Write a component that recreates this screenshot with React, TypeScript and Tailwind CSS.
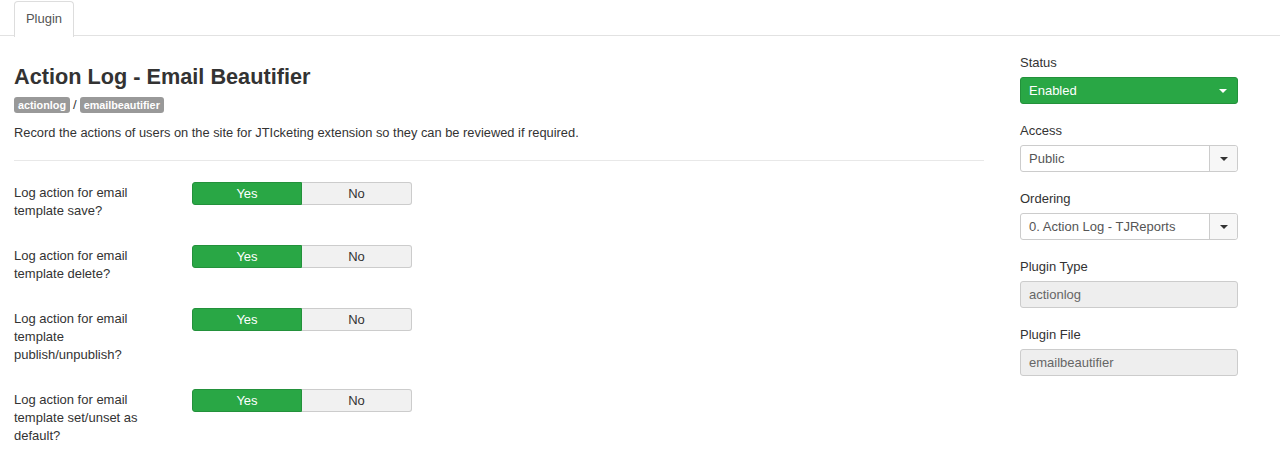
import React from 'react';

const rows = [
  'Log action for email template save?',
  'Log action for email template delete?',
  'Log action for email template publish/unpublish?',
  'Log action for email template set/unset as default?',
];

function Caret({ className }: { className: string }) {
  return (
    <svg width="8" height="4" viewBox="0 0 8 4" className={className}>
      <path d="M0 0h8L4 4z" fill="currentColor" />
    </svg>
  );
}

function YesNo() {
  return (
    <div className="flex w-[220px] h-[23px] text-[13px] leading-[21px] shrink-0">
      <div className="w-[110px] bg-[#29a745] border border-[#23913b] rounded-l-[3px] text-white text-center">
        Yes
      </div>
      <div className="flex-1 bg-[#f1f1f1] border border-l-0 border-[#cccccc] rounded-r-[3px] text-[#333] text-center">
        No
      </div>
    </div>
  );
}

function Field({ label, children }: { label: string; children: React.ReactNode }) {
  return (
    <div className="mb-[18px]">
      <div className="text-[13px] leading-[18px] text-[#333] mb-[5px]">{label}</div>
      {children}
    </div>
  );
}

function Select({ value }: { value: string }) {
  return (
    <div className="flex h-[27px] border border-[#cccccc] rounded-[3px] bg-white text-[13px] text-[#555]">
      <div className="flex-1 px-[8px] leading-[25px]">{value}</div>
      <div className="w-[28px] flex items-center justify-center bg-[#f7f7f7] border-l border-[#cccccc] rounded-r-[3px]">
        <Caret className="text-[#333]" />
      </div>
    </div>
  );
}

function ReadOnly({ value }: { value: string }) {
  return (
    <div className="h-[27px] px-[8px] leading-[25px] border border-[#cccccc] rounded-[3px] bg-[#eeeeee] text-[13px] text-[#666]">
      {value}
    </div>
  );
}

export default function App() {
  return (
    <div className="w-[1280px] h-[459px] bg-white overflow-hidden font-['Liberation_Sans',Arial,sans-serif]">
      {/* Tabs */}
      <div className="flex pl-[14px] pt-[1px] border-b border-[#e2e2e2] h-[36px]">
        <div className="w-[60px] h-[36px] bg-white border border-b-0 border-[#dddddd] rounded-t-[4px] text-[13px] text-[#555] text-center leading-[33px]">
          Plugin
        </div>
      </div>

      <div className="flex pl-[14px]">
        {/* Main column */}
        <div className="w-[970px] pt-[28px]">
          <h1 className="text-[21.7px] leading-[26px] font-bold text-[#333]">Action Log - Email Beautifier</h1>
          <div className="flex items-center gap-[3px] mt-[7px] text-[10.8px] font-bold leading-[16px]">
            <span className="bg-[#999] text-white rounded-[3px] px-[4px]">actionlog</span>
            <span className="text-[#333] text-[13px] font-normal">/</span>
            <span className="bg-[#999] text-white rounded-[3px] px-[4px]">emailbeautifier</span>
          </div>
          <p className="text-[12.85px] leading-[18px] text-[#333] mt-[11px]">
            Record the actions of users on the site for JTIcketing extension so they can be reviewed if required.
          </p>
          <div className="h-px bg-[#e8e8e8] mt-[18px] mb-[21px]" />
          {rows.map((r) => (
            <div key={r} className="flex items-start mb-[25px]">
              <div className="w-[160px] pt-[2px] text-[13px] leading-[18px] text-[#333] pr-[20px]">{r}</div>
              <div className="ml-[18px]">
                <YesNo />
              </div>
            </div>
          ))}
        </div>

        {/* Side column */}
        <div className="w-[218px] ml-[36px] pt-[18px]">
          <Field label="Status">
            <div className="flex items-center h-[27px] px-[8px] bg-[#29a745] border border-[#23913b] rounded-[3px] text-[13px] text-white">
              <span className="flex-1">Enabled</span>
              <Caret className="text-white mr-[2px]" />
            </div>
          </Field>
          <Field label="Access">
            <Select value="Public" />
          </Field>
          <Field label="Ordering">
            <Select value="0. Action Log - TJReports" />
          </Field>
          <Field label="Plugin Type">
            <ReadOnly value="actionlog" />
          </Field>
          <Field label="Plugin File">
            <ReadOnly value="emailbeautifier" />
          </Field>
        </div>
      </div>
    </div>
  );
}
